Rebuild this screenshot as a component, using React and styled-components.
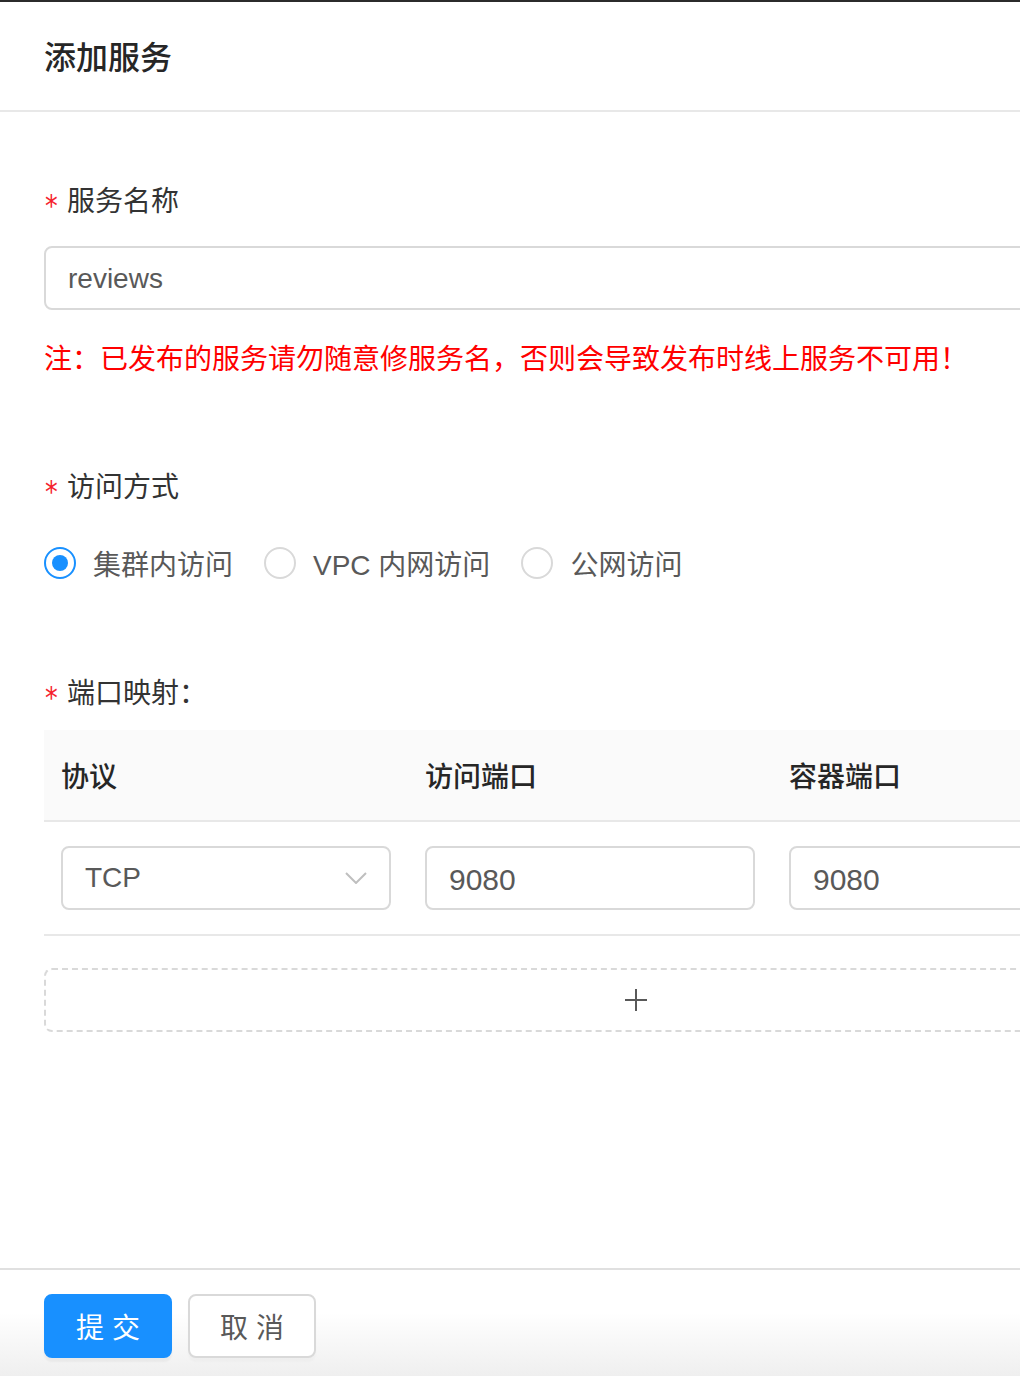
import React from "react";
import styled, { createGlobalStyle } from "styled-components";

const GlobalStyle = createGlobalStyle`
  html, body {
    margin: 0;
    padding: 0;
    background: #fff;
    overflow: hidden;
  }
  body {
    font-family: "Liberation Sans", "Noto Sans CJK SC", sans-serif;
  }
  * { box-sizing: border-box; }
`;

const Drawer = styled.div`
  width: 1272px;
  height: 1376px;
  display: flex;
  flex-direction: column;
  border-top: 2px solid #2b2b2b;
  background: #fff;
`;

const Header = styled.div`
  height: 110px;
  padding: 3px 44px 0;
  display: flex;
  align-items: center;
  border-bottom: 2px solid #e8e8e8;
`;

const Title = styled.div`
  font-size: 32px;
  font-weight: 500;
  color: #262626;
  line-height: 44px;
`;

const Body = styled.div`
  flex: 1;
  padding: 68px 44px 0;
  display: flex;
  flex-direction: column;
`;

const Label = styled.div`
  font-size: 28px;
  line-height: 44px;
  color: #333;
  display: flex;
  align-items: center;
  margin-top: ${(p) => p.$top || 0}px;
`;

const Star = styled.span`
  color: #f5222d;
  font-family: "DejaVu Sans", sans-serif;
  font-size: 30px;
  line-height: 1;
  width: 12px;
  margin-right: 11px;
  position: relative;
  top: 4px;
  transform: scaleX(0.85);
`;

const TextInput = styled.div`
  height: 64px;
  margin-top: ${(p) => p.$top || 0}px;
  border: 2px solid #d9d9d9;
  border-radius: 8px;
  padding: 0 22px;
  display: flex;
  align-items: center;
  font-size: ${(p) => (p.$num ? 30 : 28)}px;
  color: #595959;
  flex: ${(p) => (p.$grow ? 1 : "none")};
  span {
    position: relative;
    top: ${(p) => (p.$num ? 2 : 1)}px;
  }
`;

const Warning = styled.div`
  margin-top: 28px;
  font-size: 28px;
  line-height: 44px;
  color: #ff0000;
`;

const RadioGroup = styled.div`
  margin-top: 31px;
  display: flex;
  align-items: center;
  gap: 31px;
  height: 44px;
`;

const RadioItem = styled.label`
  display: flex;
  align-items: center;
  gap: 17px;
  font-size: 28px;
  color: #595959;
`;

const RadioCircle = styled.span`
  width: 32px;
  height: 32px;
  border-radius: 50%;
  border: 2px solid ${(p) => (p.$checked ? "#1890ff" : "#d9d9d9")};
  display: flex;
  align-items: center;
  justify-content: center;
  &::after {
    content: "";
    width: 16px;
    height: 16px;
    border-radius: 50%;
    background: #1890ff;
    display: ${(p) => (p.$checked ? "block" : "none")};
  }
`;

const Table = styled.div`
  margin-top: 14px;
  display: grid;
  grid-template-columns: 364px 364px 364px 1fr;
`;

const HeadCell = styled.div`
  height: 92px;
  background: #fafafa;
  border-bottom: 2px solid #e8e8e8;
  padding: 0 17px;
  display: flex;
  align-items: center;
  font-size: 28px;
  font-weight: 500;
  color: #262626;
`;

const Cell = styled.div`
  height: 114px;
  border-bottom: 2px solid #e8e8e8;
  padding: 24px 17px;
  display: flex;
`;

const Select = styled.div`
  flex: 1;
  height: 64px;
  border: 2px solid #d9d9d9;
  border-radius: 8px;
  padding: 0 22px;
  display: flex;
  align-items: center;
  justify-content: space-between;
  font-size: 28px;
  color: #595959;
`;

const AddButton = styled.div`
  margin-top: 32px;
  height: 64px;
  border: 2px dashed #d9d9d9;
  border-radius: 8px;
  display: flex;
  align-items: center;
  justify-content: center;
`;

const Footer = styled.div`
  height: 108px;
  border-top: 2px solid #e0e0e0;
  padding: 24px 44px 0;
  display: flex;
  gap: 16px;
  background: linear-gradient(#fff 40%, #efefef);
`;

const Button = styled.button`
  width: 128px;
  height: 64px;
  border-radius: 8px;
  font-family: "Liberation Sans", "Noto Sans CJK SC", sans-serif;
  font-size: 28px;
  cursor: pointer;
  border: 2px solid ${(p) => (p.$primary ? "#1890ff" : "#d9d9d9")};
  background: ${(p) => (p.$primary ? "#1890ff" : "#fff")};
  color: ${(p) => (p.$primary ? "#fff" : "#595959")};
  box-shadow: 0 4px 2px ${(p) => (p.$primary ? "rgba(0,0,0,0.04)" : "rgba(0,0,0,0.02)")};
`;

const radios = [
  { label: "集群内访问", checked: true },
  { label: "VPC 内网访问" },
  { label: "公网访问" },
];

export default function App() {
  return (
    <>
      <GlobalStyle />
      <Drawer>
        <Header>
          <Title>添加服务</Title>
        </Header>
        <Body>
          <Label>
            <Star>*</Star>服务名称
          </Label>
          <TextInput $top={22}>
            <span>reviews</span>
          </TextInput>
          <Warning>注：已发布的服务请勿随意修服务名，否则会导致发布时线上服务不可用！</Warning>

          <Label $top={84}>
            <Star>*</Star>访问方式
          </Label>
          <RadioGroup>
            {radios.map((r) => (
              <RadioItem key={r.label}>
                <RadioCircle $checked={r.checked} />
                {r.label}
              </RadioItem>
            ))}
          </RadioGroup>

          <Label $top={87}>
            <Star>*</Star>端口映射：
          </Label>
          <Table>
            <HeadCell>协议</HeadCell>
            <HeadCell>访问端口</HeadCell>
            <HeadCell>容器端口</HeadCell>
            <HeadCell />
            <Cell>
              <Select>
                TCP
                <svg width="22" height="12" viewBox="0 0 22 12" fill="none">
                  <path d="M1 1l10 10L21 1" stroke="#bfbfbf" strokeWidth="2" />
                </svg>
              </Select>
            </Cell>
            <Cell>
              <TextInput $grow $num>
                <span>9080</span>
              </TextInput>
            </Cell>
            <Cell>
              <TextInput $grow $num>
                <span>9080</span>
              </TextInput>
            </Cell>
            <Cell />
          </Table>
          <AddButton>
            <svg width="22" height="22" viewBox="0 0 22 22">
              <path d="M11 0v22M0 11h22" stroke="#595959" strokeWidth="2" />
            </svg>
          </AddButton>
        </Body>
        <Footer>
          <Button $primary>提 交</Button>
          <Button>取 消</Button>
        </Footer>
      </Drawer>
    </>
  );
}
